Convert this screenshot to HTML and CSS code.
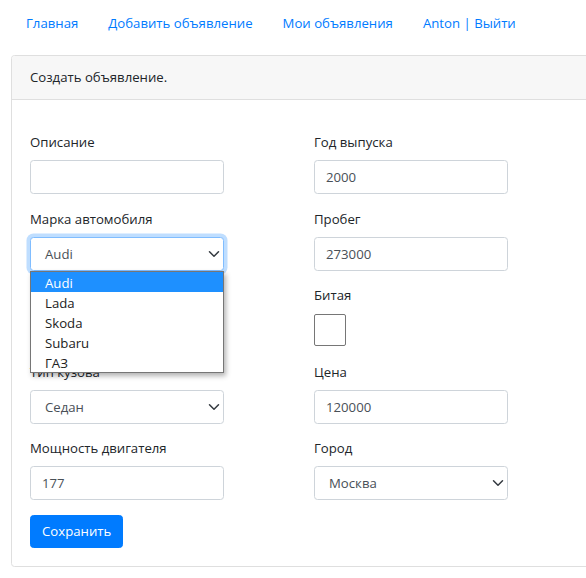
FILE: index.html
```html
<!DOCTYPE html>
<html lang="ru">
<head>
<meta charset="utf-8">
<title>Создать объявление</title>
<link rel="stylesheet" href="styles.css">
</head>
<body>
<div class="page">
  <nav class="nav">
    <a class="nav-link" href="#">Главная</a>
    <a class="nav-link" href="#">Добавить объявление</a>
    <a class="nav-link" href="#">Мои объявления</a>
    <a class="nav-link" href="#">Anton | Выйти</a>
  </nav>
  <div class="card">
    <div class="card-header">Создать объявление.</div>
    <div class="card-body">
      <div class="grid">
        <div class="col">
          <div class="group">
            <label class="label">Описание</label>
            <div class="control"></div>
          </div>
          <div class="group">
            <label class="label">Марка автомобиля</label>
            <div class="select-wrap">
              <div class="control select focus"><span>Audi</span><svg class="chev" width="12" height="12" viewBox="0 0 16 16"><path d="M2 5l6 6 6-6" fill="none" stroke="#343a40" stroke-width="2" stroke-linecap="round" stroke-linejoin="round"/></svg></div>
              <ul class="dropdown">
                <li class="opt active">Audi</li>
                <li class="opt">Lada</li>
                <li class="opt">Skoda</li>
                <li class="opt">Subaru</li>
                <li class="opt">ГАЗ</li>
              </ul>
            </div>
          </div>
          <div class="group">
            <label class="label">&nbsp;</label>
            <div class="control"></div>
          </div>
          <div class="group">
            <label class="label">Тип кузова</label>
            <div class="control select"><span>Седан</span><svg class="chev" width="12" height="12" viewBox="0 0 16 16"><path d="M2 5l6 6 6-6" fill="none" stroke="#343a40" stroke-width="2" stroke-linecap="round" stroke-linejoin="round"/></svg></div>
          </div>
          <div class="group">
            <label class="label">Мощность двигателя</label>
            <div class="control"><span>177</span></div>
          </div>
          <button class="btn" type="button">Сохранить</button>
        </div>
        <div class="col">
          <div class="group">
            <label class="label">Год выпуска</label>
            <div class="control"><span>2000</span></div>
          </div>
          <div class="group">
            <label class="label">Пробег</label>
            <div class="control"><span>273000</span></div>
          </div>
          <div class="group">
            <label class="label">Битая</label>
            <div class="check-wrap"><div class="check"></div></div>
          </div>
          <div class="group">
            <label class="label">Цена</label>
            <div class="control"><span>120000</span></div>
          </div>
          <div class="group">
            <label class="label">Город</label>
            <div class="control select"><span>Москва</span><svg class="chev" width="12" height="12" viewBox="0 0 16 16"><path d="M2 5l6 6 6-6" fill="none" stroke="#343a40" stroke-width="2" stroke-linecap="round" stroke-linejoin="round"/></svg></div>
          </div>
        </div>
      </div>
    </div>
  </div>
</div>
</body>
</html>
```
FILE: styles.css
```css
html, body {
  margin: 0;
  padding: 0;
  overflow: hidden;
  background: #fff;
}
body {
  font-family: "Segoe UI", "Open Sans", "Noto Sans", sans-serif;
  font-size: 13.2px;
  line-height: 21px;
  color: #212529;
}
.page {
  padding: 5.5px 0 0 11px;
}
.nav {
  display: flex;
}
.nav-link {
  display: block;
  padding: 7px 15px;
  color: #007bff;
  text-decoration: none;
}
.card {
  margin-top: 14.5px;
  width: 620px;
  border: 1px solid #dfdfdf;
  border-radius: 3.5px;
  background: #fff;
}
.card-header {
  background: #f7f7f7;
  border-bottom: 1px solid #dfdfdf;
  padding: 11px 18px;
  border-radius: 3.5px 3.5px 0 0;
}
.card-body {
  padding: 31px 18px 18px 18px;
}
.grid {
  display: grid;
  grid-template-columns: 284px 284px;
}
.col {
  display: flex;
  flex-direction: column;
  align-items: flex-start;
}
.group {
  width: 194px;
  margin-bottom: 13.5px;
}
.label {
  display: block;
  padding-top: 1px;
  margin-bottom: 7px;
}
.control {
  box-sizing: border-box;
  width: 194px;
  height: 34px;
  border: 1px solid #ced4da;
  border-radius: 3.5px;
  padding: 1px 11px 0 11px;
  color: #495057;
  display: flex;
  align-items: center;
  background: #fff;
}
.select {
  justify-content: space-between;
  padding-left: 14px;
  padding-right: 3px;
}
.select.focus {
  border-color: #80bdff;
  box-shadow: 0 0 0 3.5px rgba(0, 123, 255, 0.25);
}
.chev {
  display: block;
  margin-top: -1px;
}
.select-wrap {
  position: relative;
}
.dropdown {
  position: absolute;
  left: 0;
  top: 34px;
  box-sizing: border-box;
  width: 194px;
  margin: 0;
  padding: 0;
  list-style: none;
  background: #fff;
  border: 1px solid #767676;
  box-shadow: 2px 3px 5px rgba(0, 0, 0, 0.3);
  z-index: 2;
}
.opt {
  box-sizing: border-box;
  height: 20px;
  line-height: 20px;
  padding: 1px 0 0 14px;
  color: #222;
}
.opt.active {
  background: #1e90ff;
  color: #fff;
}
.check-wrap {
  height: 34px;
  display: flex;
  align-items: center;
}
.check {
  box-sizing: border-box;
  width: 32px;
  height: 32px;
  border: 1px solid #767676;
  border-radius: 2px;
  background: #fff;
}
.btn {
  font: inherit;
  height: 33px;
  margin-top: 1px;
  padding: 1px 11px 0 11px;
  border: 1px solid #007bff;
  background: #007bff;
  color: #fff;
  border-radius: 3.5px;
  cursor: pointer;
}
```
